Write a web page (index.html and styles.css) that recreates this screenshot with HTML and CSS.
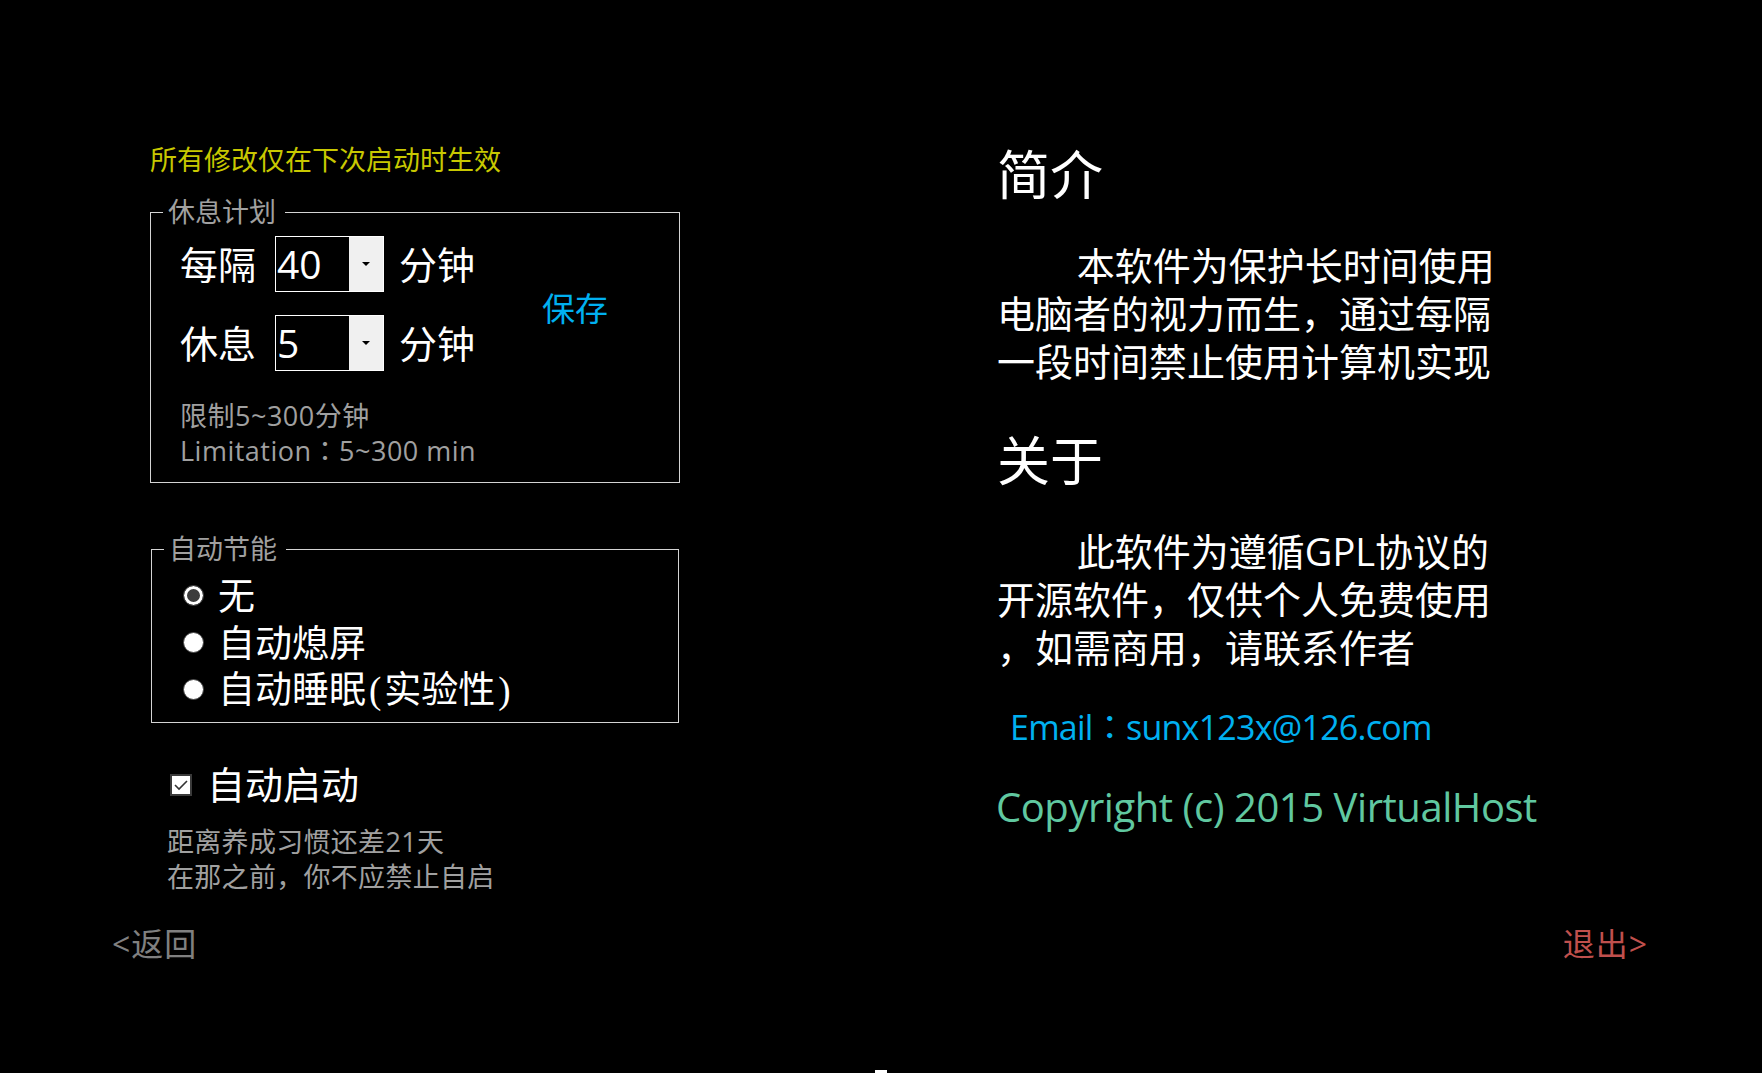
FILE: index.html
```html
<!DOCTYPE html>
<html lang="zh-CN">
<head>
<meta charset="utf-8">
<title>设置</title>
<link rel="stylesheet" href="styles.css">
</head>
<body>
<div class="page">
  <div class="main">
    <section class="settings">
      <p class="notice">所有修改仅在下次启动时生效</p>
      <fieldset class="group plan">
        <legend>休息计划</legend>
        <div class="plan-body">
          <div class="plan-rows">
            <div class="plan-row">
              <span class="plan-label">每隔</span>
              <div class="combo"><span class="combo-value">40</span><span class="combo-btn"><svg width="8" height="4" viewBox="0 0 8 4"><path d="M0 0L8 0L4 4Z" fill="#000"/></svg></span></div>
              <span class="plan-unit">分钟</span>
            </div>
            <div class="plan-row">
              <span class="plan-label">休息</span>
              <div class="combo"><span class="combo-value">5</span><span class="combo-btn"><svg width="8" height="4" viewBox="0 0 8 4"><path d="M0 0L8 0L4 4Z" fill="#000"/></svg></span></div>
              <span class="plan-unit">分钟</span>
            </div>
          </div>
          <button class="save" type="button">保存</button>
        </div>
        <p class="hint">限制5~300分钟<br>Limitation<span class="colon" lang="zh-Hant">：</span>5~300 min</p>
      </fieldset>
      <fieldset class="group power">
        <legend>自动节能</legend>
        <div class="options">
          <div class="option"><span class="radio is-checked"></span><span class="option-label">无</span></div>
          <div class="option"><span class="radio"></span><span class="option-label">自动熄屏</span></div>
          <div class="option"><span class="radio"></span><span class="option-label">自动睡眠<span class="paren">(</span>实验性<span class="paren">)</span></span></div>
        </div>
      </fieldset>
      <div class="autostart">
        <span class="checkbox"><svg width="18" height="18" viewBox="0 0 18 18"><path d="M3 9L7 13L15 5" fill="none" stroke="#333" stroke-width="1.6"/></svg></span>
        <span class="autostart-label">自动启动</span>
      </div>
      <p class="habit">距离养成习惯还差21天<br>在那之前，你不应禁止自启</p>
    </section>
    <section class="about">
      <h2 class="about-title">简介</h2>
      <p class="about-text">本软件为保护长时间使用<br>电脑者的视力而生，通过每隔<br>一段时间禁止使用计算机实现</p>
      <h2 class="about-title about-title--second">关于</h2>
      <p class="about-text">此软件为遵循GPL协议的<br>开源软件，仅供个人免费使用<br>，如需商用，请联系作者</p>
      <p class="email">Email<span class="colon" lang="zh-Hant">：</span>sunx123x@126.com</p>
      <p class="copyright">Copyright (c) 2015 VirtualHost</p>
    </section>
  </div>
  <nav class="footer"><a class="back">&lt;返回</a><a class="exit">退出&gt;</a></nav>
  <div class="bar"></div>
</div>
</body>
</html>
```
FILE: styles.css
```css
* { box-sizing: border-box; }
html, body { margin: 0; height: 100%; }
body {
  background: #000;
  color: #fff;
  font-family: "Open Sans", "Noto Sans CJK SC", sans-serif;
  overflow: hidden;
}
.page { height: 100vh; display: flex; flex-direction: column; }
.main { display: flex; align-items: flex-start; padding-left: 150px; }

.settings { width: 530px; padding-top: 140px; flex: none; }
.notice { margin: 0; font-size: 27px; line-height: 40px; color: #c8c800; }

.group { margin: 0; padding: 0; border: 1px solid #d4d4d4; min-width: 0; }
.group legend {
  margin-left: 12px;
  padding: 0 9px 0 5px;
  font-size: 27px;
  line-height: 30px;
  color: #a0a0a0;
}

.plan { margin-top: 17px; width: 530px; padding-bottom: 14px; }
.plan-body { display: flex; align-items: flex-start; padding: 9px 0 0 29px; }
.plan-rows { display: flex; flex-direction: column; gap: 23px; }
.plan-row { display: flex; align-items: center; height: 56px; }
.plan-label, .plan-unit { font-size: 38px; line-height: 48px; }
.plan-label { margin-right: 19px; }
.plan-unit { margin-left: 15px; }
.combo { display: flex; width: 109px; height: 56px; border: 1px solid #fff; flex: none; }
.combo-value { flex: 1; font-size: 39px; line-height: 54px; padding-left: 1px; }
.combo-btn {
  width: 34px;
  background: #f0f0f0;
  display: flex;
  align-items: center;
  justify-content: center;
}
.combo-btn svg { display: block; }
.save {
  margin: 53px 0 0 67px;
  padding: 0;
  border: 0;
  background: none;
  color: #00b0f0;
  font: inherit;
  font-size: 33px;
  line-height: 40px;
}
.hint {
  margin: 27px 0 0;
  padding-left: 29px;
  font-size: 27px;
  line-height: 35px;
  letter-spacing: 0.5px;
  color: #a0a0a0;
}
.colon { font-family: "Noto Sans CJK TC", "Noto Sans CJK JP", sans-serif; line-height: 1; }

.power { margin: 51px 0 0 1px; width: 528px; padding-bottom: 9px; }
.options { padding: 8px 0 0 31px; }
.option { display: flex; align-items: center; height: 47px; }
.radio {
  flex: none;
  width: 21px;
  height: 21px;
  border-radius: 50%;
  background: #fff;
  border: 1px solid #444;
}
.radio.is-checked { background: #3c3c3c; box-shadow: inset 0 0 0 3px #fff; }
.option-label { margin-left: 14px; font-size: 37px; line-height: 47px; }
.paren { font-family: "Liberation Serif", serif; padding: 0 3px; }

.autostart { display: flex; align-items: center; height: 47px; margin-top: 38px; padding-left: 20px; }
.checkbox {
  flex: none;
  width: 22px;
  height: 22px;
  border: 2px solid #3a3a3a;
  background: #fff;
  display: flex;
}
.checkbox svg { display: block; }
.autostart-label { margin-left: 15px; font-size: 38px; line-height: 47px; }
.habit {
  margin: 16px 0 0;
  padding-left: 17px;
  font-size: 27px;
  line-height: 35px;
  letter-spacing: 0.3px;
  color: #a0a0a0;
}

.about { margin-left: 317px; padding-top: 144.7px; }
.about-title { margin: 0; font-size: 53px; line-height: 60px; font-weight: normal; }
.about-title--second { margin-top: 46px; }
.about-text {
  margin: 36px 0 0;
  font-size: 38px;
  line-height: 48px;
  text-indent: 2.1em;
  white-space: nowrap;
}
.email {
  margin: 34px 0 0 13px;
  font-size: 34px;
  line-height: 44px;
  letter-spacing: -0.75px;
  color: #00b0f0;
}
.copyright {
  margin: 33.5px 0 0 -1px;
  font-size: 40px;
  line-height: 50px;
  letter-spacing: -0.45px;
  color: #60c8a0;
}

.footer {
  display: flex;
  justify-content: space-between;
  margin-top: 30px;
  padding: 0 114px 0 112px;
  font-size: 32px;
  line-height: 40px;
  letter-spacing: 1px;
}
.back { color: #808080; }
.exit { color: #c0504d; }
.bar { margin-top: auto; align-self: center; width: 12px; height: 3px; background: #fff; }
```
